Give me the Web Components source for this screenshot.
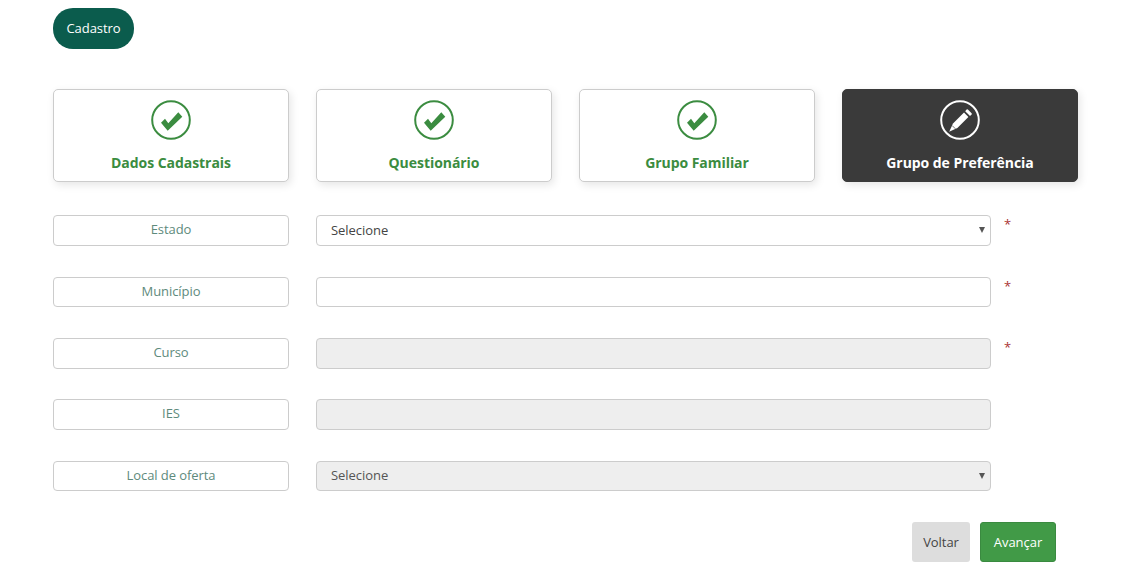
<!DOCTYPE html>
<html lang="pt">
<head>
<meta charset="utf-8">
<title>Cadastro</title>
<style>
html,body{margin:0;padding:0;background:#fff;height:565px;overflow:hidden}
body{font-family:"Open Sans",sans-serif;font-size:13px;color:#333}
</style>
</head>
<body>
<cad-page>
  <cad-pill slot="head">Cadastro</cad-pill>
  <cad-step slot="steps" done>Dados Cadastrais</cad-step>
  <cad-step slot="steps" done>Questionário</cad-step>
  <cad-step slot="steps" done>Grupo Familiar</cad-step>
  <cad-step slot="steps" active>Grupo de Preferência</cad-step>
  <cad-row slot="rows" label="Estado" type="select" required style="--h:62px"></cad-row>
  <cad-row slot="rows" label="Município" type="text" required style="--h:61px;--fh:30px"></cad-row>
  <cad-row slot="rows" label="Curso" type="text" required disabled style="--h:61px"></cad-row>
  <cad-row slot="rows" label="IES" type="text" disabled style="--h:62px"></cad-row>
  <cad-row slot="rows" label="Local de oferta" type="select" disabled style="--h:61px;--fh:30px"></cad-row>
  <cad-button slot="actions" kind="back">Voltar</cad-button>
  <cad-button slot="actions" kind="next">Avançar</cad-button>
</cad-page>
<script>
class CadPage extends HTMLElement{
  constructor(){
    super();
    this.attachShadow({mode:"open"}).innerHTML=`
    <style>
      :host{display:block;width:1129px;padding:8px 0 0 53px;box-sizing:border-box}
      .steps{display:grid;grid-template-columns:repeat(4,236px);column-gap:27px;margin-top:40px}
      .rows{margin-top:33px;display:block}
      .actions{display:flex;justify-content:flex-end;gap:10px;width:1003px}
    </style>
    <div class="head"><slot name="head"></slot></div>
    <div class="steps"><slot name="steps"></slot></div>
    <div class="rows"><slot name="rows"></slot></div>
    <div class="actions"><slot name="actions"></slot></div>`;
  }
}
class CadPill extends HTMLElement{
  constructor(){
    super();
    this.attachShadow({mode:"open"}).innerHTML=`
    <style>
      :host{display:inline-flex;align-items:center;justify-content:center;box-sizing:border-box;width:81px;height:41px;padding-bottom:2px;border-radius:20px;background:#0b5c4d;color:#fff;font-size:13px;letter-spacing:-.05px}
    </style><slot></slot>`;
  }
}
const CHECK='<path d="M10 22.7L14 18.8 17.3 23.2 27.3 12.3 31.3 16.7 16.7 30.7z" fill="currentColor"/>';
const PENCIL='<path d="M13 23.6L24 12.6 28.4 17 17.4 28 9.2 31.8z" fill="currentColor"/><path d="M25.2 11.2L26.6 9.6Q27.2 9 27.9 9.6L31.6 13.3Q32.2 14 31.6 14.6L30 16.1z" fill="currentColor"/><path d="M12.2 25.6L15.4 28.8" stroke="#3a3a3a" stroke-width=".7" fill="none"/>';
class CadStep extends HTMLElement{
  constructor(){
    super();
    const active=this.hasAttribute("active");
    this.attachShadow({mode:"open"}).innerHTML=`
    <style>
      :host{display:flex;flex-direction:column;align-items:center;box-sizing:border-box;height:93px;padding-top:10px;border:1px solid #ccc;border-radius:5px;background:#fff;color:#3b8c40;box-shadow:2px 3px 8px rgba(0,0,0,.1);font-size:14px;font-weight:700;letter-spacing:-.05px}
      :host([active]){background:#3a3a3a;border-color:#3a3a3a;color:#fff}
      svg{display:block;width:40px;height:40px}
      .t{margin-top:11px;line-height:24px}
    </style>
    <svg viewBox="0 0 40 40"><circle cx="20" cy="20" r="18.8" fill="none" stroke="currentColor" stroke-width="2"/>${active?PENCIL:CHECK}</svg>
    <div class="t"><slot></slot></div>`;
  }
}
class CadRow extends HTMLElement{
  constructor(){
    super();
    const label=this.getAttribute("label"),dis=this.hasAttribute("disabled")?"disabled":"";
    const isSelect=this.getAttribute("type")==="select";
    const field=isSelect
      ?`<select ${dis}><option>Selecione</option></select><i class="arrow"></i>`
      :`<input type="text" ${dis}>`;
    this.attachShadow({mode:"open"}).innerHTML=`
    <style>
      :host{display:grid;grid-template-columns:236px 675px auto;column-gap:27px;height:var(--h);align-items:start}
      .label{box-sizing:border-box;height:var(--fh,31px);border:1px solid #ccc;border-radius:4px;display:flex;align-items:center;justify-content:center;padding-bottom:3px;color:#5e8a7c;font-size:13px;letter-spacing:-.07px}
      input,select{display:block;box-sizing:border-box;width:675px;height:var(--fh,31px);margin:0;border:1px solid #ccc;border-radius:4px;background:#fff;color:#444;font:13px "Open Sans",sans-serif;letter-spacing:-.05px;padding:0 14px 2px;outline:0;opacity:1;appearance:none;-webkit-appearance:none}
      input:disabled,select:disabled{background:#eee;color:#555;opacity:1}
      .star{grid-column:3;margin-left:-14px;color:#a33;font-size:13px;line-height:18px}
      .f{position:relative}
      .arrow{position:absolute;right:6px;top:12px;width:0;height:0;border-left:3.5px solid transparent;border-right:3.5px solid transparent;border-top:6px solid #555;pointer-events:none}
    </style>
    <div class="label">${label}</div>
    <div class="f">${field}</div>
    ${this.hasAttribute("required")?'<span class="star">*</span>':""}`;
  }
}
class CadButton extends HTMLElement{
  constructor(){
    super();
    this.attachShadow({mode:"open"}).innerHTML=`
    <style>
      :host{display:flex;align-items:center;justify-content:center;box-sizing:border-box;height:40px;border-radius:3px;font-size:13px;letter-spacing:-.05px}
      :host([kind=back]){width:58px;background:#ddd;color:#444}
      :host([kind=next]){width:76px;background:#419a47;border:1px solid #3a8a40;color:#fff}
    </style><slot></slot>`;
  }
}
customElements.define("cad-page",CadPage);
customElements.define("cad-pill",CadPill);
customElements.define("cad-step",CadStep);
customElements.define("cad-row",CadRow);
customElements.define("cad-button",CadButton);
</script>
</body>
</html>
